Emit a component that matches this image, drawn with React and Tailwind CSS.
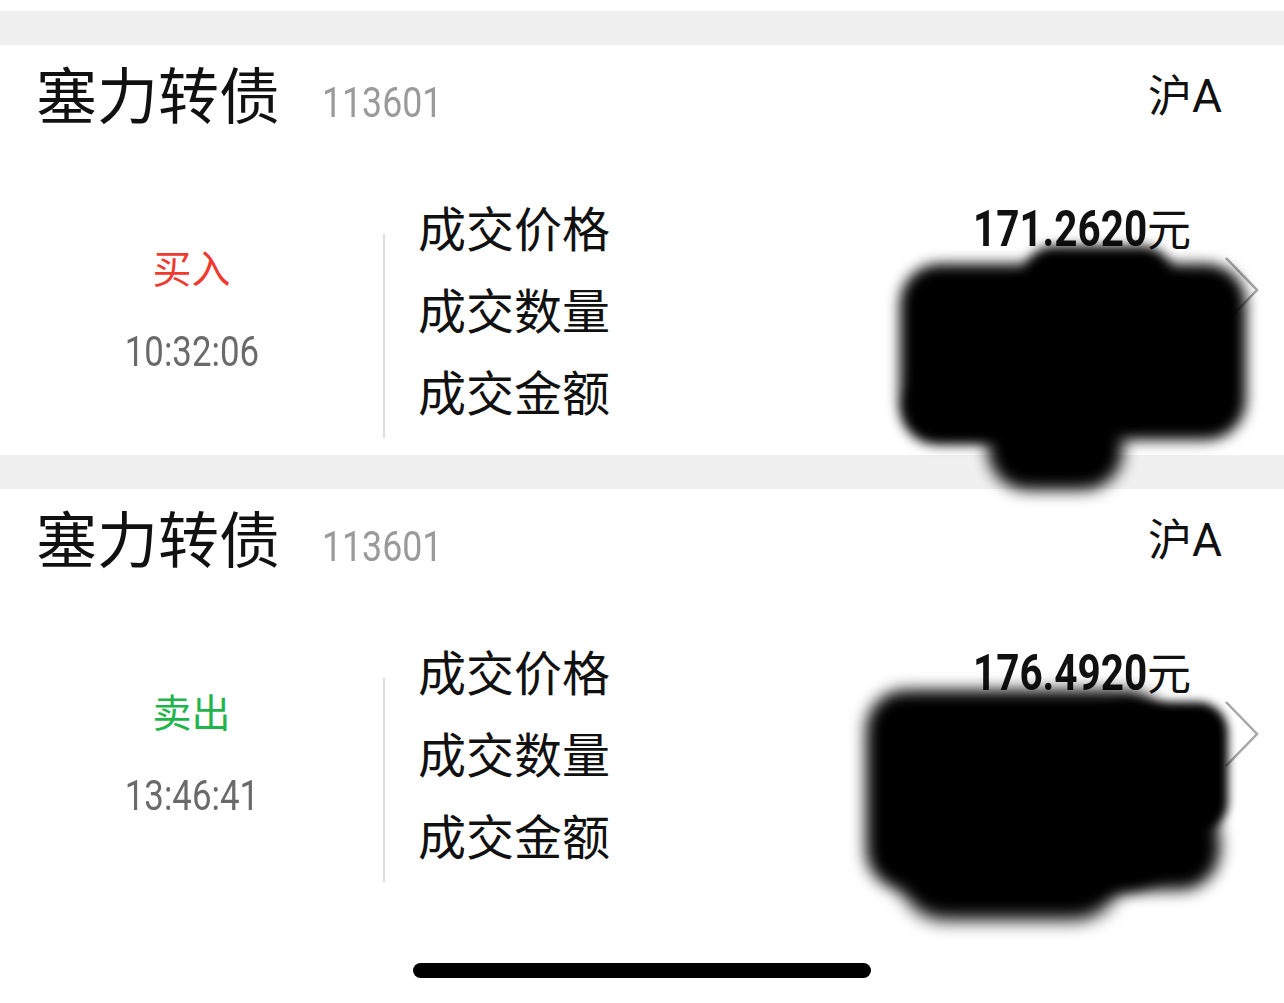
import React from "react";

const CJK = "font-['Noto_Sans_CJK_SC','Noto_Sans',sans-serif]";
const NUM = "font-['Roboto','Liberation_Sans',sans-serif]";

function Chevron() {
  return (
    <svg width="36" height="68" viewBox="0 0 36 68" className="absolute left-[1224px] top-[211px]">
      <polyline points="2,2 33,34 2,66" fill="none" stroke="#a8a8a8" strokeWidth="2.5" />
    </svg>
  );
}

function Card({ side, sideColor, time, price }) {
  return (
    <div className={`relative h-[410px] bg-white ${CJK}`}>
      <div className="h-[104px] flex items-center pl-[36px] pr-[62px]">
        <span className="text-[61px] leading-none text-[#111] -mt-[10px]">塞力转债</span>
        <span className={`${NUM} inline-block origin-left scale-x-[0.83] ml-[42px] mt-[10px] text-[43px] leading-none text-[#9a9a9a]`}>113601</span>
        <span className="ml-auto flex items-baseline text-[#111] leading-none -mt-[4px]">
          <span className="text-[44px]">沪</span>
          <span className={`${NUM} text-[46px]`}>A</span>
        </span>
      </div>
      <div className="flex mt-[40px]">
        <div className="w-[383px] flex flex-col items-center">
          <div className={`mt-[53px] text-[39px] leading-[48px] ${sideColor}`}>{side}</div>
          <div className={`${NUM} inline-block scale-x-[0.81] mt-[37px] text-[43px] leading-[48px] text-[#6a6a6a]`}>{time}</div>
        </div>
        <div className="w-[2px] mt-[45px] h-[204px] bg-[#dcdcdc]" />
        <div className="flex-1 pl-[33px] pr-[93px] flex flex-col -mt-[4px]">
          <div className="h-[82px] flex items-center justify-between">
            <span className="text-[48px] leading-none text-[#111]">成交价格</span>
            <span className="flex items-baseline leading-none text-[#111] mt-[6px]">
              <span className={`${NUM} inline-block origin-right scale-x-[0.81] font-bold text-[50px]`}>{price}</span>
              <span className="text-[44px]">元</span>
            </span>
          </div>
          <div className="h-[82px] flex items-center">
            <span className="text-[48px] leading-none text-[#111]">成交数量</span>
          </div>
          <div className="h-[82px] flex items-center">
            <span className="text-[48px] leading-none text-[#111]">成交金额</span>
          </div>
        </div>
      </div>
      <Chevron />
    </div>
  );
}

export default function App() {
  return (
    <div className="relative w-[1284px] h-[1003px] bg-white overflow-hidden flex flex-col">
      <div className="h-[11px] shrink-0" />
      <div className="h-[34px] shrink-0 bg-[#f0f0f0]" />
      <Card side="买入" sideColor="text-[#ef3a2f]" time="10:32:06" price="171.2620" />
      <div className="h-[34px] shrink-0 bg-[#f0f0f0]" />
      <Card side="卖出" sideColor="text-[#1fb54c]" time="13:46:41" price="176.4920" />
      <div className="flex-1 flex justify-center">
        <div className="mt-[64px] w-[458px] h-[15px] rounded-full bg-black" />
      </div>

      {/* redaction blob 1 */}
      <div className="absolute inset-0 pointer-events-none">
        <div className="absolute left-[900px] top-[264px] w-[346px] h-[176px] rounded-[40px] bg-black blur-[7px]" />
        <div className="absolute left-[1024px] top-[246px] w-[148px] h-[60px] rounded-[30px] bg-black blur-[6px]" />
        <div className="absolute left-[988px] top-[400px] w-[135px] h-[90px] rounded-[40px] bg-black blur-[8px]" />
        <div className="absolute left-[905px] top-[380px] w-[120px] h-[62px] rounded-[30px] bg-black blur-[7px]" />

        {/* redaction blob 2 */}
        <div className="absolute left-[866px] top-[690px] w-[300px] h-[200px] rounded-[40px] bg-black blur-[8px]" />
        <div className="absolute left-[1100px] top-[702px] w-[128px] h-[130px] rounded-[30px] bg-black blur-[5px]" />
        <div className="absolute left-[1050px] top-[800px] w-[170px] h-[90px] rounded-[40px] bg-black blur-[8px]" />
        <div className="absolute left-[900px] top-[820px] w-[220px] h-[100px] rounded-[45px] bg-black blur-[9px]" />
      </div>
    </div>
  );
}
